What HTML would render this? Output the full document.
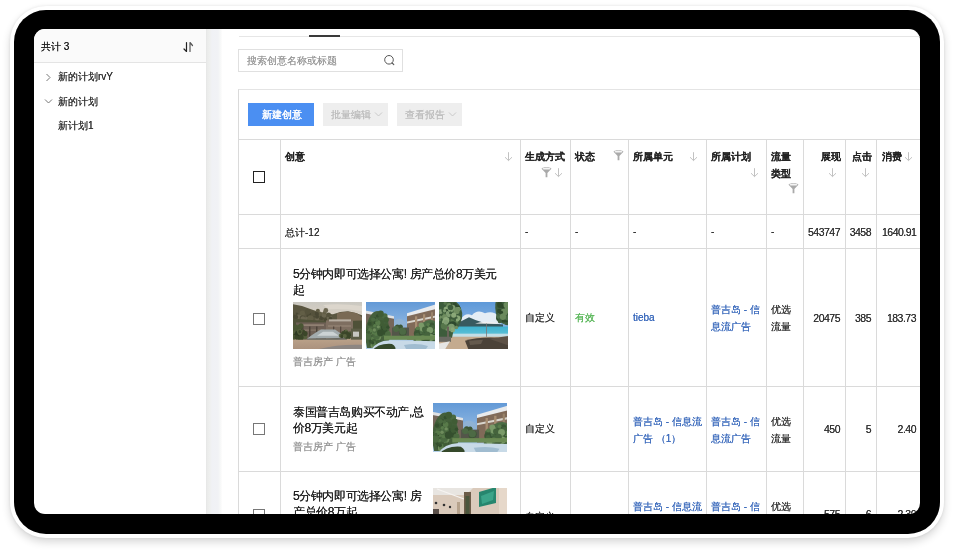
<!DOCTYPE html>
<html><head><meta charset="utf-8">
<style>
html,body{margin:0;padding:0;width:954px;height:552px;overflow:hidden;background:#fff;font-family:"Liberation Sans",sans-serif;}
.abs{position:absolute;}
#frame{position:absolute;left:10px;top:6px;width:934px;height:532px;border-radius:36px;background:#fff;box-shadow:0 4px 9px rgba(0,0,0,0.16),0 0 3px rgba(0,0,0,0.08);}
#bezel{position:absolute;left:14px;top:10px;width:926px;height:524px;border-radius:32px;background:#000;}
#screen{position:absolute;left:34px;top:29px;width:886px;height:485px;border-radius:11px;background:#fff;overflow:hidden;}
#pg{position:absolute;left:-34px;top:-29px;width:954px;height:552px;will-change:transform;}
.t{position:absolute;white-space:nowrap;color:#333;font-size:10px;line-height:12px;text-shadow:0 0 0.3px currentColor;}
.b{-webkit-text-stroke:0.5px #222;color:#222;}
.n{font-size:10.5px;letter-spacing:-0.5px;}
.r{text-align:right;}
.blue{color:#3d6cbd;}
.vl{position:absolute;width:1px;background:#dadada;}
.hl{position:absolute;height:1px;background:#dadada;}
.ic{position:absolute;}
.cb{position:absolute;box-sizing:border-box;width:12px;height:12px;border:1.3px solid #777;background:#fff;}
.img{position:absolute;filter:blur(0.5px);}
</style></head>
<body>
<div id="frame"></div>
<div id="bezel"></div>
<div id="screen"><div id="pg">
  <!-- ============ sidebar ============ -->
  <div class="abs" style="left:34px;top:29px;width:172px;height:33px;background:#fafafa;border-bottom:1px solid #e4e4e4;"></div>
  <div class="t" style="left:41px;top:41px;color:#222">共计 3</div>
  <svg class="ic" style="left:182px;top:41px" width="13" height="12" viewBox="0 0 13 12">
    <path d="M4.5 1.5 V10.5 L2 8" fill="none" stroke="#222" stroke-width="1.2" stroke-linecap="round" stroke-linejoin="round"/>
    <path d="M8 10.5 V1.5 L10.5 4.5" fill="none" stroke="#555" stroke-width="1.2" stroke-linecap="round" stroke-linejoin="round"/>
  </svg>
  <svg class="ic" style="left:45px;top:73px" width="7" height="9" viewBox="0 0 7 9"><path d="M1.5 1 L5 4.5 L1.5 8" fill="none" stroke="#777" stroke-width="1"/></svg>
  <div class="t" style="left:58px;top:71px;">新的计划rvY</div>
  <svg class="ic" style="left:44px;top:98px" width="9" height="7" viewBox="0 0 9 7"><path d="M1 1.5 L4.5 5 L8 1.5" fill="none" stroke="#777" stroke-width="1"/></svg>
  <div class="t" style="left:58px;top:96px;">新的计划</div>
  <div class="t" style="left:58px;top:120px;">新计划1</div>
  <div class="abs" style="left:206px;top:29px;width:16px;height:500px;background:linear-gradient(to right,#e6e6e6 0,#ebeceb 1.5px,#eff0ef 4px,#f0f1f5 6px,#f1f2f5 12px,#f6f7f7 14px,#fdfdfd 16px);"></div>

  <!-- ============ main top ============ -->
  <div class="hl" style="left:239px;top:36px;width:700px;background:#e6e6e6"></div>
  <div class="abs" style="left:309px;top:35px;width:31px;height:2px;background:#3a3a3a"></div>

  <div class="abs" style="left:238px;top:49px;width:163px;height:21px;border:1px solid #e0e0e0;"></div>
  <div class="t" style="left:247px;top:55px;color:#9a9a9a">搜索创意名称或标题</div>
  <svg class="ic" style="left:383px;top:54px" width="13" height="13" viewBox="0 0 13 13">
    <circle cx="6" cy="5.8" r="4.3" fill="none" stroke="#555" stroke-width="1"/>
    <path d="M9.2 9 L10.8 10.6" stroke="#555" stroke-width="1.1" stroke-linecap="round"/>
  </svg>

  <div class="abs" style="left:238px;top:89px;width:700px;height:500px;border-left:1px solid #dadada;border-top:1px solid #e4e4e4;"></div>
  <div class="abs" style="left:248px;top:103px;width:66px;height:23px;background:#4b8ff2;"></div>
  <div class="t" style="left:262px;top:109px;color:#fff;-webkit-text-stroke:0.25px #fff">新建创意</div>
  <div class="abs" style="left:323px;top:103px;width:65px;height:23px;background:#eeeeee;"></div>
  <div class="t" style="left:331px;top:109px;color:#bdbdbd">批量编辑</div>
  <svg class="ic" style="left:374px;top:111px" width="10" height="7" viewBox="0 0 10 7"><path d="M1 1.5 L4.5 5 L8 1.5" fill="none" stroke="#c4c4c4" stroke-width="0.9"/></svg>
  <div class="abs" style="left:397px;top:103px;width:65px;height:23px;background:#eeeeee;"></div>
  <div class="t" style="left:405px;top:109px;color:#bdbdbd">查看报告</div>
  <svg class="ic" style="left:448px;top:111px" width="10" height="7" viewBox="0 0 10 7"><path d="M1 1.5 L4.5 5 L8 1.5" fill="none" stroke="#c4c4c4" stroke-width="0.9"/></svg>

  <!-- ============ table grid ============ -->
  <div class="hl" style="left:238px;top:139px;width:700px"></div>
  <div class="hl" style="left:238px;top:214px;width:700px"></div>
  <div class="hl" style="left:238px;top:248px;width:700px"></div>
  <div class="hl" style="left:238px;top:386px;width:700px"></div>
  <div class="hl" style="left:238px;top:471px;width:700px"></div>
  <div class="vl" style="left:280px;top:139px;height:400px"></div>
  <div class="vl" style="left:520px;top:139px;height:400px"></div>
  <div class="vl" style="left:570px;top:139px;height:400px"></div>
  <div class="vl" style="left:628px;top:139px;height:400px"></div>
  <div class="vl" style="left:706px;top:139px;height:400px"></div>
  <div class="vl" style="left:766px;top:139px;height:400px"></div>
  <div class="vl" style="left:803px;top:139px;height:400px"></div>
  <div class="vl" style="left:845px;top:139px;height:400px"></div>
  <div class="vl" style="left:876px;top:139px;height:400px"></div>

  <!-- header -->
  <div class="cb" style="left:253px;top:171px;border:1.5px solid #222"></div>
  <div class="t b" style="left:285px;top:151px;">创意</div>
  <svg class="ic arr" style="left:504px;top:151px" width="10" height="11" viewBox="0 0 10 11"><path d="M4.5 1.2 V9.6 M1 6.2 L4.5 9.6 L8 6.2" fill="none" stroke="#c2c2c2" stroke-width="1"/></svg>
  <div class="t b" style="left:525px;top:151px;">生成方式</div>
  <svg class="ic" style="left:541px;top:167px" width="11" height="11" viewBox="0 0 11 11"><path d="M0.6 1.8 C0.6 -0.2 10.4 -0.2 10.4 1.8 L6.4 6 V10.2 H4.6 V6 Z" fill="#aaa"/><ellipse cx="5.5" cy="1.7" rx="3.9" ry="0.85" fill="#f4f4f4"/></svg>
  <svg class="ic" style="left:554px;top:167px" width="10" height="11" viewBox="0 0 10 11"><path d="M4.5 1.2 V9.6 M1 6.2 L4.5 9.6 L8 6.2" fill="none" stroke="#c2c2c2" stroke-width="1"/></svg>
  <div class="t b" style="left:575px;top:151px;">状态</div>
  <svg class="ic" style="left:613px;top:150px" width="11" height="11" viewBox="0 0 11 11"><path d="M0.6 1.8 C0.6 -0.2 10.4 -0.2 10.4 1.8 L6.4 6 V10.2 H4.6 V6 Z" fill="#aaa"/><ellipse cx="5.5" cy="1.7" rx="3.9" ry="0.85" fill="#f4f4f4"/></svg>
  <div class="t b" style="left:633px;top:151px;">所属单元</div>
  <svg class="ic" style="left:689px;top:151px" width="10" height="11" viewBox="0 0 10 11"><path d="M4.5 1.2 V9.6 M1 6.2 L4.5 9.6 L8 6.2" fill="none" stroke="#c2c2c2" stroke-width="1"/></svg>
  <div class="t b" style="left:711px;top:151px;">所属计划</div>
  <svg class="ic" style="left:750px;top:167px" width="10" height="11" viewBox="0 0 10 11"><path d="M4.5 1.2 V9.6 M1 6.2 L4.5 9.6 L8 6.2" fill="none" stroke="#c2c2c2" stroke-width="1"/></svg>
  <div class="t b" style="left:771px;top:151px;">流量</div>
  <div class="t b" style="left:771px;top:168px;">类型</div>
  <svg class="ic" style="left:788px;top:183px" width="11" height="11" viewBox="0 0 11 11"><path d="M0.6 1.8 C0.6 -0.2 10.4 -0.2 10.4 1.8 L6.4 6 V10.2 H4.6 V6 Z" fill="#aaa"/><ellipse cx="5.5" cy="1.7" rx="3.9" ry="0.85" fill="#f4f4f4"/></svg>
  <div class="t b r" style="left:800px;width:41px;top:151px;">展现</div>
  <svg class="ic" style="left:828px;top:167px" width="10" height="11" viewBox="0 0 10 11"><path d="M4.5 1.2 V9.6 M1 6.2 L4.5 9.6 L8 6.2" fill="none" stroke="#c2c2c2" stroke-width="1"/></svg>
  <div class="t b r" style="left:830px;width:42px;top:151px;">点击</div>
  <svg class="ic" style="left:861px;top:167px" width="10" height="11" viewBox="0 0 10 11"><path d="M4.5 1.2 V9.6 M1 6.2 L4.5 9.6 L8 6.2" fill="none" stroke="#c2c2c2" stroke-width="1"/></svg>
  <div class="t b" style="left:882px;top:151px;">消费</div>
  <svg class="ic" style="left:904px;top:151px" width="10" height="11" viewBox="0 0 10 11"><path d="M4.5 1.2 V9.6 M1 6.2 L4.5 9.6 L8 6.2" fill="none" stroke="#c2c2c2" stroke-width="1"/></svg>

  <!-- total row -->
  <div class="t" style="left:285px;top:227px;">总计-12</div>
  <div class="t" style="left:525px;top:226px;">-</div>
  <div class="t" style="left:575px;top:226px;">-</div>
  <div class="t" style="left:633px;top:226px;">-</div>
  <div class="t" style="left:711px;top:226px;">-</div>
  <div class="t" style="left:771px;top:226px;">-</div>
  <div class="t n r" style="left:789px;width:51px;top:226px;">543747</div>
  <div class="t n r" style="left:829px;width:42px;top:226px;">3458</div>
  <div class="t n" style="left:882px;top:226px;">1640.91</div>

  <!-- image symbols -->
  <svg width="0" height="0" style="position:absolute">
    <defs>
      <linearGradient id="gA" x1="0" y1="0" x2="0" y2="1"><stop offset="0" stop-color="#c7c6c0"/><stop offset="1" stop-color="#ddd3c5"/></linearGradient>
      <linearGradient id="gB" x1="0" y1="0" x2="0" y2="1"><stop offset="0" stop-color="#5f97d6"/><stop offset="1" stop-color="#b9d3ea"/></linearGradient>
      <linearGradient id="gC" x1="0" y1="0" x2="0" y2="1"><stop offset="0" stop-color="#5b97d8"/><stop offset="1" stop-color="#a9cbea"/></linearGradient>
      <filter id="bl" x="-5%" y="-5%" width="110%" height="110%"><feGaussianBlur stdDeviation="0.7"/></filter>
      <linearGradient id="gA2" x1="0" y1="0" x2="0" y2="1"><stop offset="0" stop-color="#b9a088"/><stop offset="1" stop-color="#a88f7c"/></linearGradient>
      <linearGradient id="gC2" x1="0" y1="0" x2="0" y2="1"><stop offset="0" stop-color="#3fb2cf"/><stop offset="1" stop-color="#5cc0d6"/></linearGradient>
      <symbol id="imA" viewBox="0 0 69 46" preserveAspectRatio="none">
        <rect x="-2" y="-2" width="73" height="50" fill="#b39c86"/>
        <rect x="-2" y="-2" width="73" height="18" fill="url(#gA)"/>
        <path d="M30 3 Q46 1 69 4 V9 Q52 6 36 7Z" fill="#dcd6cc"/>
        <path d="M-2 2 Q8 3 18 7 Q28 11 40 12 Q47 9 55 9 Q63 10 71 14 V30 H-2Z" fill="#5a5640"/>
        <circle cx="16.8" cy="16.0" r="2.8" fill="#55523c"/><circle cx="22.3" cy="12.5" r="2.7" fill="#4a4834"/><circle cx="33.0" cy="15.0" r="1.6" fill="#55523c"/><circle cx="16.2" cy="13.6" r="2.6" fill="#4a4834"/><circle cx="9.2" cy="10.3" r="1.6" fill="#6b6650"/><circle cx="28.5" cy="14.9" r="2.6" fill="#4a4834"/><circle cx="18.3" cy="16.1" r="1.7" fill="#625e46"/><circle cx="3.8" cy="11.9" r="1.7" fill="#4a4834"/><circle cx="9.3" cy="17.5" r="1.6" fill="#55523c"/><circle cx="9.4" cy="10.9" r="2.6" fill="#625e46"/><circle cx="-0.5" cy="15.4" r="2.2" fill="#4a4834"/><circle cx="24.9" cy="8.6" r="2.0" fill="#625e46"/><circle cx="-0.1" cy="13.0" r="3.0" fill="#625e46"/><circle cx="16.4" cy="13.1" r="2.5" fill="#4a4834"/><circle cx="20.3" cy="11.7" r="2.5" fill="#55523c"/><circle cx="24.6" cy="13.6" r="2.6" fill="#625e46"/><circle cx="13.7" cy="17.1" r="2.5" fill="#6b6650"/><circle cx="24.8" cy="14.7" r="2.0" fill="#55523c"/><circle cx="36.5" cy="16.1" r="2.8" fill="#6b6650"/><circle cx="17.3" cy="17.9" r="2.8" fill="#55523c"/><circle cx="31.0" cy="12.6" r="2.7" fill="#6b6650"/><circle cx="37.5" cy="16.2" r="1.8" fill="#4a4834"/><circle cx="3.3" cy="18.0" r="2.5" fill="#4a4834"/><circle cx="5.4" cy="15.5" r="3.3" fill="#6b6650"/><circle cx="26.7" cy="11.5" r="2.3" fill="#625e46"/><circle cx="14.9" cy="10.4" r="2.0" fill="#55523c"/><circle cx="24.1" cy="16.6" r="2.0" fill="#6b6650"/><circle cx="23.9" cy="11.8" r="2.1" fill="#4a4834"/><circle cx="9.4" cy="15.9" r="2.6" fill="#4a4834"/><circle cx="14.6" cy="9.6" r="2.7" fill="#55523c"/><circle cx="0.5" cy="15.7" r="3.4" fill="#6b6650"/><circle cx="9.9" cy="16.4" r="2.5" fill="#6b6650"/><circle cx="24.0" cy="14.5" r="1.9" fill="#4a4834"/><circle cx="32.5" cy="17.3" r="1.7" fill="#4a4834"/><circle cx="-0.8" cy="12.5" r="2.7" fill="#55523c"/><circle cx="31.6" cy="10.3" r="1.8" fill="#625e46"/><circle cx="35.6" cy="12.6" r="2.4" fill="#55523c"/><circle cx="32.8" cy="8.3" r="2.4" fill="#6b6650"/><circle cx="17.4" cy="16.0" r="3.0" fill="#625e46"/><circle cx="2.5" cy="14.8" r="2.5" fill="#4a4834"/>
        <path d="M44 11 Q54 8 64 11 L69 15 V22 H44Z" fill="#7a6a54"/>
        <path d="M-2 16 Q20 18 40 19 L71 18 V32 H-2Z" fill="#4f5138"/>
        <rect x="3" y="20" width="30" height="17" fill="#6e6055"/>
        <rect x="33" y="18" width="27" height="13" fill="#7e6e60"/>
        <rect x="36" y="17" width="22" height="2" fill="#b8aea2"/>
        <rect x="5" y="22" width="26" height="1.2" fill="#a09080"/>
        <rect x="5" y="27" width="26" height="1" fill="#8e8070"/>
        <rect x="35" y="23" width="23" height="1" fill="#9a8a7a"/>
        <rect x="9" y="24" width="1.5" height="12" fill="#4e443a"/>
        <rect x="16" y="24" width="1.5" height="12" fill="#4e443a"/>
        <rect x="23" y="24" width="1.5" height="12" fill="#4e443a"/>
        <rect x="40" y="24" width="1.3" height="7" fill="#55483e"/>
        <rect x="47" y="24" width="1.3" height="7" fill="#55483e"/>
        <circle cx="10.5" cy="28.3" r="1.5" fill="#3b4629"/><circle cx="6.2" cy="26.1" r="2.4" fill="#3b4629"/><circle cx="5.0" cy="26.6" r="1.9" fill="#4a5634"/><circle cx="4.2" cy="32.6" r="2.2" fill="#2e3a22"/><circle cx="2.6" cy="25.5" r="2.6" fill="#4a5634"/><circle cx="8.1" cy="23.3" r="2.5" fill="#4a5634"/><circle cx="7.4" cy="35.0" r="2.5" fill="#3b4629"/><circle cx="7.1" cy="25.1" r="1.5" fill="#2e3a22"/><circle cx="-0.4" cy="32.5" r="3.0" fill="#2e3a22"/><circle cx="7.6" cy="31.0" r="2.0" fill="#2e3a22"/><circle cx="7.5" cy="35.8" r="2.8" fill="#3b4629"/><circle cx="0.6" cy="30.8" r="2.6" fill="#3b4629"/><circle cx="7.0" cy="28.1" r="1.9" fill="#4a5634"/><circle cx="3.5" cy="30.4" r="2.6" fill="#2e3a22"/><circle cx="11.8" cy="34.0" r="2.5" fill="#56603e"/><circle cx="0.5" cy="34.5" r="2.5" fill="#4a5634"/><circle cx="6.8" cy="30.0" r="2.3" fill="#56603e"/><circle cx="6.8" cy="27.6" r="2.7" fill="#56603e"/><circle cx="3.9" cy="26.4" r="2.2" fill="#4a5634"/><circle cx="12.1" cy="30.9" r="2.5" fill="#3b4629"/><circle cx="-0.6" cy="28.7" r="2.0" fill="#4a5634"/><circle cx="7.3" cy="27.2" r="1.7" fill="#2e3a22"/><circle cx="0.0" cy="30.0" r="1.8" fill="#56603e"/><circle cx="6.7" cy="28.7" r="2.5" fill="#56603e"/><circle cx="2.8" cy="24.0" r="2.1" fill="#4a5634"/><circle cx="1.3" cy="28.9" r="1.2" fill="#56603e"/><circle cx="6.9" cy="24.1" r="2.6" fill="#4a5634"/><circle cx="8.1" cy="34.5" r="2.5" fill="#3b4629"/><circle cx="3.8" cy="34.8" r="2.2" fill="#3b4629"/><circle cx="6.9" cy="29.0" r="1.5" fill="#3b4629"/>
        <path d="M14 36 Q22 30 28 27 L42 27 Q48 31 54 35 Z" fill="#a2abad"/>
        <path d="M24 33 L30 29 L40 29 L46 33Z" fill="#ccd3d4"/>
        <path d="M14 36 L54 35 L54 37 L14 38Z" fill="#6a6a62"/>
        <circle cx="52.6" cy="29.4" r="2.2" fill="#3b4629"/><circle cx="47.8" cy="33.0" r="2.1" fill="#5a6440"/><circle cx="52.9" cy="33.8" r="2.1" fill="#4a5634"/><circle cx="49.4" cy="31.9" r="2.1" fill="#4a5634"/><circle cx="57.0" cy="30.3" r="1.6" fill="#4a5634"/><circle cx="53.1" cy="32.9" r="2.0" fill="#3b4629"/><circle cx="50.3" cy="29.9" r="1.6" fill="#4a5634"/><circle cx="53.2" cy="28.3" r="1.5" fill="#5a6440"/><circle cx="50.0" cy="30.3" r="1.7" fill="#3b4629"/><circle cx="54.4" cy="31.7" r="2.9" fill="#4a5634"/><circle cx="53.5" cy="31.1" r="2.4" fill="#3b4629"/><circle cx="53.9" cy="34.1" r="2.1" fill="#4a5634"/><circle cx="49.2" cy="33.0" r="1.4" fill="#4a5634"/><circle cx="56.2" cy="32.3" r="2.0" fill="#3b4629"/><circle cx="49.0" cy="33.8" r="1.7" fill="#3b4629"/><circle cx="56.3" cy="34.5" r="1.6" fill="#3b4629"/><circle cx="54.4" cy="32.9" r="2.8" fill="#3b4629"/><circle cx="51.8" cy="33.2" r="2.0" fill="#5a6440"/>
        <rect x="58" y="26" width="13" height="11" fill="#5c5d46"/>
        <rect x="60" y="29" width="6" height="5" fill="#c8c8c2"/>
        <rect x="-2" y="37" width="73" height="11" fill="url(#gA2)"/>
        <path d="M26 46 Q46 41 71 42 V48 H22 Z" fill="#8d8682"/>
      </symbol>
      <symbol id="imB" viewBox="0 0 69 46" preserveAspectRatio="none">
        <g filter="url(#bl)">
        <rect x="-2" y="-2" width="73" height="50" fill="url(#gB)"/>
        <path d="M26 22 Q32 12 40 20 L42 30 H26Z" fill="#8fb2d4"/>
        <path d="M41 12 L71 3 V37 H41Z" fill="#806a58"/>
        <path d="M41 11 L71 2 V6.5 L41 14Z" fill="#e8eaec"/>
        <path d="M41 19 L71 13 V15 L41 21Z" fill="#d8d4cc"/>
        <rect x="49" y="14" width="2.2" height="21" fill="#a88e72"/>
        <rect x="57" y="12" width="2.2" height="23" fill="#a88e72"/>
        <rect x="65" y="10" width="2" height="24" fill="#9a846a"/>
        <path d="M-2 9 L28 15 V35 H-2Z" fill="#75665a"/>
        <path d="M-2 8 L28 14 V16.5 L-2 11Z" fill="#dfe1e3"/>
        <rect x="26" y="25" width="17" height="10" fill="#52564a"/>
        <path d="M1 45 Q-3 28 3 16 Q9 5 16 11 Q25 18 23 32 Q25 41 18 45Z" fill="#44603b"/><circle cx="12.6" cy="38.8" r="2.2" fill="#35502e"/><circle cx="4.2" cy="29.0" r="2.7" fill="#6e8c5c"/><circle cx="11.7" cy="34.1" r="3.5" fill="#6e8c5c"/><circle cx="4.6" cy="24.0" r="2.3" fill="#4b6a40"/><circle cx="12.4" cy="32.4" r="3.4" fill="#6e8c5c"/><circle cx="11.5" cy="13.6" r="1.6" fill="#35502e"/><circle cx="21.1" cy="30.9" r="3.1" fill="#587a4a"/><circle cx="3.1" cy="29.4" r="3.3" fill="#6e8c5c"/><circle cx="4.4" cy="36.1" r="2.4" fill="#4b6a40"/><circle cx="14.0" cy="24.1" r="1.8" fill="#4b6a40"/><circle cx="11.6" cy="40.4" r="3.1" fill="#587a4a"/><circle cx="3.3" cy="34.2" r="2.6" fill="#35502e"/><circle cx="5.1" cy="20.7" r="3.3" fill="#3f5c36"/><circle cx="18.8" cy="13.7" r="2.8" fill="#4b6a40"/><circle cx="10.2" cy="18.8" r="2.6" fill="#35502e"/><circle cx="3.8" cy="21.2" r="1.9" fill="#35502e"/><circle cx="11.7" cy="31.8" r="2.5" fill="#6e8c5c"/><circle cx="20.2" cy="34.9" r="2.3" fill="#4b6a40"/><circle cx="18.6" cy="28.3" r="2.3" fill="#3f5c36"/><circle cx="19.9" cy="30.5" r="1.6" fill="#35502e"/><circle cx="7.0" cy="40.8" r="3.5" fill="#35502e"/><circle cx="12.1" cy="29.3" r="1.5" fill="#3f5c36"/><circle cx="10.9" cy="25.8" r="1.9" fill="#6e8c5c"/><circle cx="10.7" cy="34.4" r="2.9" fill="#587a4a"/><circle cx="7.8" cy="42.3" r="3.3" fill="#6e8c5c"/><circle cx="4.8" cy="37.9" r="2.3" fill="#35502e"/><circle cx="10.8" cy="23.1" r="3.4" fill="#35502e"/><circle cx="10.9" cy="39.8" r="2.9" fill="#587a4a"/><circle cx="7.5" cy="29.9" r="2.1" fill="#587a4a"/><circle cx="18.5" cy="27.7" r="2.7" fill="#3f5c36"/><circle cx="6.3" cy="35.7" r="1.8" fill="#587a4a"/><circle cx="3.5" cy="29.8" r="2.2" fill="#587a4a"/><circle cx="11.9" cy="25.3" r="1.6" fill="#3f5c36"/><circle cx="16.7" cy="25.3" r="2.4" fill="#35502e"/><circle cx="8.9" cy="23.4" r="1.9" fill="#587a4a"/><circle cx="14.8" cy="20.6" r="3.1" fill="#3f5c36"/><circle cx="12.2" cy="25.1" r="2.6" fill="#4b6a40"/><circle cx="10.4" cy="33.4" r="3.1" fill="#4b6a40"/><circle cx="7.9" cy="38.9" r="2.8" fill="#3f5c36"/><circle cx="16.5" cy="32.1" r="2.2" fill="#4b6a40"/><circle cx="2.7" cy="32.8" r="1.8" fill="#587a4a"/><circle cx="11.8" cy="20.2" r="2.6" fill="#587a4a"/><circle cx="12.5" cy="31.7" r="2.6" fill="#4b6a40"/><circle cx="8.1" cy="41.0" r="2.6" fill="#587a4a"/><circle cx="6.7" cy="39.8" r="1.7" fill="#35502e"/><circle cx="10.2" cy="31.1" r="2.1" fill="#587a4a"/><circle cx="3.8" cy="29.8" r="2.1" fill="#35502e"/><circle cx="3.2" cy="35.7" r="1.8" fill="#3f5c36"/><circle cx="2.2" cy="29.2" r="2.7" fill="#35502e"/><circle cx="2.2" cy="33.6" r="3.4" fill="#4b6a40"/><circle cx="18.7" cy="29.1" r="3.0" fill="#35502e"/><circle cx="19.4" cy="24.3" r="3.3" fill="#3f5c36"/><circle cx="18.8" cy="14.0" r="1.7" fill="#4b6a40"/><circle cx="21.9" cy="31.5" r="2.9" fill="#4b6a40"/><circle cx="20.2" cy="17.3" r="2.7" fill="#3f5c36"/><circle cx="8.9" cy="27.6" r="2.5" fill="#4b6a40"/><circle cx="8.1" cy="17.1" r="2.3" fill="#35502e"/><circle cx="14.4" cy="30.2" r="3.4" fill="#35502e"/><circle cx="2.6" cy="29.1" r="2.2" fill="#4b6a40"/><circle cx="19.4" cy="38.0" r="1.7" fill="#4b6a40"/><circle cx="14.7" cy="11.4" r="3.1" fill="#3f5c36"/><circle cx="4.2" cy="28.0" r="2.3" fill="#587a4a"/><circle cx="12.1" cy="39.7" r="2.5" fill="#3f5c36"/><circle cx="2.7" cy="29.5" r="1.5" fill="#3f5c36"/><circle cx="12.3" cy="24.3" r="1.6" fill="#6e8c5c"/><circle cx="21.9" cy="24.6" r="1.7" fill="#35502e"/><circle cx="8.4" cy="27.4" r="1.6" fill="#6e8c5c"/><circle cx="7.2" cy="17.2" r="2.2" fill="#4b6a40"/><circle cx="18.6" cy="26.2" r="1.8" fill="#3f5c36"/><circle cx="10.7" cy="17.7" r="1.7" fill="#4b6a40"/><circle cx="31.4" cy="24.4" r="2.5" fill="#3d5636"/><circle cx="32.7" cy="26.7" r="2.0" fill="#4e6a44"/><circle cx="37.5" cy="29.4" r="3.3" fill="#3d5636"/><circle cx="30.0" cy="26.4" r="2.9" fill="#4e6a44"/><circle cx="34.1" cy="25.1" r="2.9" fill="#4e6a44"/><circle cx="37.8" cy="29.4" r="2.2" fill="#3d5636"/><circle cx="32.3" cy="24.7" r="1.6" fill="#4e6a44"/><circle cx="32.5" cy="24.4" r="1.9" fill="#3d5636"/><circle cx="36.0" cy="30.4" r="2.8" fill="#3d5636"/><circle cx="36.7" cy="28.8" r="3.3" fill="#4e6a44"/><circle cx="30.4" cy="26.0" r="2.4" fill="#4e6a44"/><circle cx="34.8" cy="23.8" r="1.7" fill="#3d5636"/><path d="M47 40 Q49 26 57 20 Q66 15 71 21 V41Z" fill="#4c6c45"/><circle cx="66.7" cy="31.5" r="2.8" fill="#3a5634"/><circle cx="58.9" cy="29.0" r="3.3" fill="#44643c"/><circle cx="55.0" cy="34.2" r="2.9" fill="#3a5634"/><circle cx="66.2" cy="28.4" r="1.5" fill="#5a7c4c"/><circle cx="51.4" cy="28.4" r="1.6" fill="#3a5634"/><circle cx="60.5" cy="32.6" r="1.6" fill="#7a9a68"/><circle cx="52.7" cy="36.0" r="3.1" fill="#7a9a68"/><circle cx="66.4" cy="35.0" r="3.4" fill="#3a5634"/><circle cx="55.5" cy="23.5" r="2.6" fill="#44643c"/><circle cx="63.4" cy="23.2" r="2.4" fill="#5a7c4c"/><circle cx="60.3" cy="28.6" r="1.7" fill="#44643c"/><circle cx="56.7" cy="25.8" r="3.1" fill="#7a9a68"/><circle cx="61.7" cy="27.9" r="3.2" fill="#3a5634"/><circle cx="65.5" cy="22.5" r="2.7" fill="#44643c"/><circle cx="69.1" cy="31.7" r="2.5" fill="#5a7c4c"/><circle cx="67.2" cy="34.7" r="3.4" fill="#44643c"/><circle cx="50.4" cy="27.4" r="1.9" fill="#44643c"/><circle cx="60.2" cy="33.2" r="2.0" fill="#3a5634"/><circle cx="59.9" cy="36.6" r="3.4" fill="#3a5634"/><circle cx="66.0" cy="28.9" r="2.0" fill="#3a5634"/><circle cx="66.0" cy="22.7" r="2.3" fill="#3a5634"/><circle cx="63.5" cy="34.3" r="3.3" fill="#5a7c4c"/><circle cx="67.6" cy="34.3" r="3.3" fill="#3a5634"/><circle cx="51.4" cy="25.8" r="1.8" fill="#5a7c4c"/><circle cx="64.5" cy="34.8" r="3.4" fill="#7a9a68"/><circle cx="55.3" cy="22.8" r="2.7" fill="#7a9a68"/><circle cx="64.2" cy="27.2" r="2.0" fill="#3a5634"/><circle cx="62.4" cy="36.1" r="2.0" fill="#3a5634"/><circle cx="60.5" cy="27.2" r="3.5" fill="#3a5634"/><circle cx="58.7" cy="26.7" r="2.7" fill="#44643c"/><circle cx="51.0" cy="30.9" r="3.2" fill="#3a5634"/><circle cx="62.1" cy="21.8" r="1.6" fill="#5a7c4c"/><circle cx="66.6" cy="25.6" r="3.1" fill="#44643c"/><circle cx="69.7" cy="27.9" r="2.0" fill="#5a7c4c"/><circle cx="60.5" cy="27.3" r="2.7" fill="#44643c"/><circle cx="63.9" cy="27.7" r="3.2" fill="#7a9a68"/><circle cx="61.1" cy="32.0" r="3.1" fill="#44643c"/><circle cx="68.2" cy="34.4" r="2.1" fill="#7a9a68"/><circle cx="51.3" cy="32.2" r="2.2" fill="#44643c"/><circle cx="56.6" cy="34.7" r="2.5" fill="#5a7c4c"/>
        <rect x="18" y="33" width="53" height="4" fill="#6b8a52"/>
        <path d="M4 48 Q10 38 24 37.5 L71 38.5 V48Z" fill="#c8dae7"/>
        <path d="M38 42 Q52 40 62 43 L60 46 H40Z" fill="#a0bcd0"/>
        <path d="M6 48 Q12 40 26 41 Q31 44 29 48Z" fill="#34482b"/>
        </g>
      </symbol>
      <symbol id="imC" viewBox="0 0 69 46" preserveAspectRatio="none">
        <g filter="url(#bl)">
        <rect x="-2" y="-2" width="73" height="50" fill="url(#gC)"/>
        <path d="M22 17 Q26 10 33 13 Q38 7 46 11 Q54 8 60 14 Q64 16 62 21 H22Z" fill="#e4edf5"/>
        <path d="M14 23 Q22 19 30 15 Q36 18 44 20 L64 22 V25 H14Z" fill="#395a60"/>
        <rect x="10" y="24" width="61" height="8" fill="url(#gC2)"/>
        <rect x="10" y="31" width="61" height="3.5" fill="#c2dee6"/>
        <path d="M36 21 Q47 17.5 62 21.5 Z" fill="#f0f0f0"/>
        <rect x="47" y="21" width="0.8" height="14" fill="#7a7a7a"/>
        <rect x="-2" y="34" width="73" height="14" fill="#c4ab8f"/>
        <path d="M26 38 Q40 34 58 35 L71 38 V48 H30 Z" fill="#4b4239"/>
        <path d="M50 36 L71 33 V43 Z" fill="#5d5145"/>
        <path d="M30 38 L44 37 L42 41 L31 42Z" fill="#655a4e"/>
        <path d="M-2 -2 H15 Q25 5 23 16 Q21 24 15 26 L13 35 H-2Z" fill="#3e5c3b"/><circle cx="10.2" cy="4.3" r="3.0" fill="#6f8e60"/><circle cx="14.4" cy="17.8" r="1.6" fill="#56764c"/><circle cx="17.7" cy="16.4" r="2.0" fill="#2f4a2e"/><circle cx="6.2" cy="19.7" r="2.3" fill="#2f4a2e"/><circle cx="10.9" cy="11.4" r="2.5" fill="#3e5c3b"/><circle cx="15.1" cy="22.3" r="2.9" fill="#2f4a2e"/><circle cx="11.8" cy="2.6" r="1.9" fill="#56764c"/><circle cx="1.4" cy="9.5" r="2.3" fill="#7e9c70"/><circle cx="16.2" cy="21.5" r="3.2" fill="#56764c"/><circle cx="6.0" cy="12.7" r="1.9" fill="#6f8e60"/><circle cx="6.1" cy="18.9" r="3.2" fill="#8aa878"/><circle cx="19.0" cy="5.4" r="2.3" fill="#2f4a2e"/><circle cx="14.9" cy="10.1" r="2.5" fill="#2f4a2e"/><circle cx="7.7" cy="7.7" r="3.2" fill="#8aa878"/><circle cx="14.4" cy="15.0" r="2.8" fill="#3e5c3b"/><circle cx="11.2" cy="3.2" r="2.5" fill="#2f4a2e"/><circle cx="6.8" cy="10.2" r="3.1" fill="#56764c"/><circle cx="17.7" cy="16.1" r="2.8" fill="#8aa878"/><circle cx="14.3" cy="18.2" r="2.8" fill="#56764c"/><circle cx="16.9" cy="23.2" r="2.7" fill="#3e5c3b"/><circle cx="18.9" cy="15.7" r="2.5" fill="#8aa878"/><circle cx="-1.1" cy="10.8" r="2.1" fill="#6f8e60"/><circle cx="8.8" cy="10.1" r="3.2" fill="#2f4a2e"/><circle cx="10.3" cy="12.2" r="1.7" fill="#6f8e60"/><circle cx="14.6" cy="13.9" r="1.6" fill="#56764c"/><circle cx="0.6" cy="18.6" r="2.5" fill="#3e5c3b"/><circle cx="11.6" cy="6.0" r="3.2" fill="#7e9c70"/><circle cx="14.2" cy="21.8" r="2.9" fill="#2f4a2e"/><circle cx="12.8" cy="9.6" r="2.5" fill="#3e5c3b"/><circle cx="0.1" cy="16.6" r="2.3" fill="#56764c"/><circle cx="8.4" cy="14.5" r="2.0" fill="#6f8e60"/><circle cx="3.8" cy="16.5" r="2.3" fill="#3e5c3b"/><circle cx="11.8" cy="8.1" r="2.2" fill="#8aa878"/><circle cx="6.1" cy="13.0" r="1.5" fill="#2f4a2e"/><circle cx="6.6" cy="16.7" r="1.6" fill="#3e5c3b"/><circle cx="4.3" cy="8.6" r="1.9" fill="#3e5c3b"/><circle cx="5.1" cy="18.0" r="1.6" fill="#7e9c70"/><circle cx="16.6" cy="16.6" r="2.3" fill="#3e5c3b"/><circle cx="19.4" cy="7.0" r="2.0" fill="#8aa878"/><circle cx="6.0" cy="14.8" r="2.7" fill="#6f8e60"/><circle cx="17.5" cy="8.7" r="3.1" fill="#6f8e60"/><circle cx="8.4" cy="26.0" r="2.4" fill="#6f8e60"/><circle cx="1.5" cy="14.7" r="1.6" fill="#6f8e60"/><circle cx="5.6" cy="8.6" r="1.7" fill="#7e9c70"/><circle cx="7.4" cy="15.3" r="2.7" fill="#3e5c3b"/><circle cx="12.8" cy="14.6" r="1.8" fill="#3e5c3b"/><circle cx="5.6" cy="14.6" r="2.5" fill="#6f8e60"/><circle cx="13.6" cy="27.1" r="2.5" fill="#8aa878"/><circle cx="20.0" cy="7.3" r="1.6" fill="#6f8e60"/><circle cx="10.1" cy="3.4" r="2.3" fill="#6f8e60"/><circle cx="12.8" cy="21.5" r="2.5" fill="#2f4a2e"/><circle cx="5.2" cy="23.6" r="3.4" fill="#56764c"/><circle cx="15.7" cy="3.1" r="2.3" fill="#2f4a2e"/><circle cx="7.2" cy="17.9" r="3.1" fill="#8aa878"/><circle cx="11.3" cy="26.0" r="2.5" fill="#6f8e60"/><circle cx="13.4" cy="5.6" r="3.0" fill="#7e9c70"/><circle cx="6.2" cy="1.2" r="1.6" fill="#56764c"/><circle cx="9.7" cy="12.6" r="2.4" fill="#7e9c70"/><circle cx="8.7" cy="10.9" r="2.0" fill="#7e9c70"/><circle cx="18.4" cy="17.6" r="1.6" fill="#8aa878"/><circle cx="17.9" cy="7.0" r="2.2" fill="#6f8e60"/><circle cx="14.5" cy="14.1" r="3.1" fill="#3e5c3b"/><circle cx="6.9" cy="19.9" r="2.4" fill="#7e9c70"/><circle cx="12.4" cy="24.8" r="3.5" fill="#7e9c70"/><circle cx="17.4" cy="24.9" r="1.7" fill="#6f8e60"/><circle cx="14.7" cy="12.8" r="2.6" fill="#8aa878"/><circle cx="-1.3" cy="13.6" r="2.1" fill="#2f4a2e"/><circle cx="11.5" cy="5.3" r="2.7" fill="#3e5c3b"/><circle cx="11.5" cy="10.6" r="1.5" fill="#3e5c3b"/><circle cx="13.5" cy="26.4" r="1.7" fill="#8aa878"/><rect x="8" y="24" width="2" height="11" fill="#6a6458"/>
        <path d="M-2 34 H12 V39 H-2Z" fill="#6a6a62"/>
        <path d="M-2 41 L11 38.5 L5 48 H-2Z" fill="#e6e6e4"/>
        <path d="M57 -2 H71 V23 Q62 23 58 15 Q55 6 57 -2Z" fill="#3d5b3b"/><circle cx="60.0" cy="15.8" r="2.9" fill="#3d5b3b"/><circle cx="61.3" cy="2.7" r="3.2" fill="#2e482c"/><circle cx="60.5" cy="14.9" r="3.1" fill="#2e482c"/><circle cx="67.6" cy="3.1" r="3.1" fill="#4e6e48"/><circle cx="65.3" cy="10.4" r="2.1" fill="#3d5b3b"/><circle cx="63.6" cy="13.4" r="3.0" fill="#2e482c"/><circle cx="60.2" cy="14.0" r="2.7" fill="#4e6e48"/><circle cx="65.0" cy="19.9" r="1.6" fill="#4e6e48"/><circle cx="63.6" cy="11.0" r="1.9" fill="#4e6e48"/><circle cx="65.0" cy="5.7" r="1.9" fill="#6a8a5c"/><circle cx="69.4" cy="6.8" r="2.3" fill="#4e6e48"/><circle cx="70.6" cy="3.9" r="2.5" fill="#6a8a5c"/><circle cx="60.0" cy="11.5" r="1.6" fill="#3d5b3b"/><circle cx="65.7" cy="12.5" r="2.9" fill="#2e482c"/><circle cx="63.7" cy="10.0" r="2.4" fill="#4e6e48"/><circle cx="64.9" cy="4.9" r="2.4" fill="#2e482c"/><circle cx="62.4" cy="10.8" r="3.1" fill="#4e6e48"/><circle cx="67.7" cy="13.2" r="2.3" fill="#3d5b3b"/><circle cx="66.3" cy="16.9" r="3.1" fill="#2e482c"/><circle cx="71.8" cy="8.4" r="3.3" fill="#2e482c"/><circle cx="69.0" cy="7.7" r="3.4" fill="#6a8a5c"/><circle cx="60.2" cy="8.8" r="2.2" fill="#2e482c"/><circle cx="64.0" cy="16.8" r="3.3" fill="#2e482c"/><circle cx="64.9" cy="-0.5" r="2.5" fill="#3d5b3b"/><circle cx="68.2" cy="15.5" r="2.6" fill="#4e6e48"/><circle cx="65.2" cy="9.9" r="3.5" fill="#6a8a5c"/><circle cx="60.8" cy="18.5" r="2.2" fill="#3d5b3b"/><circle cx="62.0" cy="10.3" r="2.1" fill="#2e482c"/><circle cx="67.6" cy="3.0" r="3.1" fill="#6a8a5c"/><circle cx="63.9" cy="14.4" r="3.1" fill="#6a8a5c"/>
        </g>
      </symbol>
      <symbol id="imD" viewBox="0 0 74 49" preserveAspectRatio="none">
        <g filter="url(#bl)">
        <rect x="-2" y="-2" width="78" height="53" fill="#dacabb"/>
        <path d="M-2 -2 H42 L33 7 H-2Z" fill="#e8e5e1"/>
        <path d="M4 1 L31 11" stroke="#f6f4f2" stroke-width="1.2"/>
        <rect x="31" y="4" width="7" height="24" fill="#6c5b48"/>
        <rect x="32.5" y="8" width="4" height="19" fill="#4c573c"/>
        <path d="M46 4 L63 -1 V15 L46 19Z" fill="#28866e"/>
        <path d="M48 8 L61 3 L60 12 L49 16Z" fill="#3aa489"/>
        <circle cx="3" cy="15" r="1.3" fill="#333"/>
        <circle cx="11" cy="17" r="1.3" fill="#333"/>
        <circle cx="17" cy="19" r="1.2" fill="#333"/>
        <rect x="0" y="21" width="6" height="5" fill="#5a5048"/>
        <rect x="24" y="14" width="3" height="15" fill="#b6a28c"/>
        <rect x="66" y="-2" width="10" height="53" fill="#e6d8ca"/>
        </g>
      </symbol>
    </defs>
  </svg>

  <!-- row 1 -->
  <div class="cb" style="left:253px;top:313px;"></div>
  <div class="t" style="left:293px;top:266px;font-size:12px;letter-spacing:-0.4px;line-height:16px;color:#222;">5分钟内即可选择公寓! 房产总价8万美元<br>起</div>
  <svg class="img" style="left:293px;top:302px" width="69" height="47"><use href="#imA"/></svg>
  <svg class="img" style="left:366px;top:302px" width="69" height="47"><use href="#imB"/></svg>
  <svg class="img" style="left:439px;top:302px" width="69" height="47"><use href="#imC"/></svg>
  <div class="t" style="left:293px;top:356px;color:#999">普吉房产 广告</div>
  <div class="t" style="left:525px;top:312px;">自定义</div>
  <div class="t" style="left:575px;top:312px;color:#5cb85c">有效</div>
  <div class="t" style="left:633px;top:312px;color:#3d6cbd">tieba</div>
  <div class="t blue" style="left:711px;top:301px;line-height:17px;">普吉岛 - 信<br>息流广告</div>
  <div class="t" style="left:771px;top:301px;line-height:17px;">优选<br>流量</div>
  <div class="t n r" style="left:789px;width:51px;top:312px;">20475</div>
  <div class="t n r" style="left:829px;width:42px;top:312px;">385</div>
  <div class="t n r" style="left:865px;width:51px;top:312px;">183.73</div>

  <!-- row 2 -->
  <div class="cb" style="left:253px;top:423px;"></div>
  <div class="t" style="left:293px;top:404px;font-size:12px;letter-spacing:-0.4px;line-height:16px;color:#222;">泰国普吉岛购买不动产,总<br>价8万美元起</div>
  <div class="t" style="left:293px;top:441px;color:#999">普吉房产 广告</div>
  <svg class="img" style="left:433px;top:403px" width="74" height="49"><use href="#imB"/></svg>
  <div class="t" style="left:525px;top:423px;">自定义</div>
  <div class="t blue" style="left:633px;top:413px;line-height:17px;">普吉岛 - 信息流<br>广告 （1）</div>
  <div class="t blue" style="left:711px;top:413px;line-height:17px;">普吉岛 - 信<br>息流广告</div>
  <div class="t" style="left:771px;top:413px;line-height:17px;">优选<br>流量</div>
  <div class="t n r" style="left:789px;width:51px;top:423px;">450</div>
  <div class="t n r" style="left:829px;width:42px;top:423px;">5</div>
  <div class="t n r" style="left:865px;width:51px;top:423px;">2.40</div>

  <!-- row 3 -->
  <div class="cb" style="left:253px;top:509px;"></div>
  <div class="t" style="left:293px;top:488px;font-size:12px;letter-spacing:-0.4px;line-height:16px;color:#222;">5分钟内即可选择公寓! 房<br>产总价8万起</div>
  <svg class="img" style="left:433px;top:488px" width="74" height="49"><use href="#imD"/></svg>
  <div class="t" style="left:525px;top:511px;">自定义</div>
  <div class="t blue" style="left:633px;top:498px;line-height:17px;">普吉岛 - 信息流<br>广告 （2）</div>
  <div class="t blue" style="left:711px;top:498px;line-height:17px;">普吉岛 - 信<br>息流广告</div>
  <div class="t" style="left:771px;top:498px;line-height:17px;">优选<br>流量</div>
  <div class="t n r" style="left:789px;width:51px;top:508px;">575</div>
  <div class="t n r" style="left:829px;width:42px;top:508px;">6</div>
  <div class="t n r" style="left:865px;width:51px;top:508px;">2.30</div>
</div></div>
</body></html>
